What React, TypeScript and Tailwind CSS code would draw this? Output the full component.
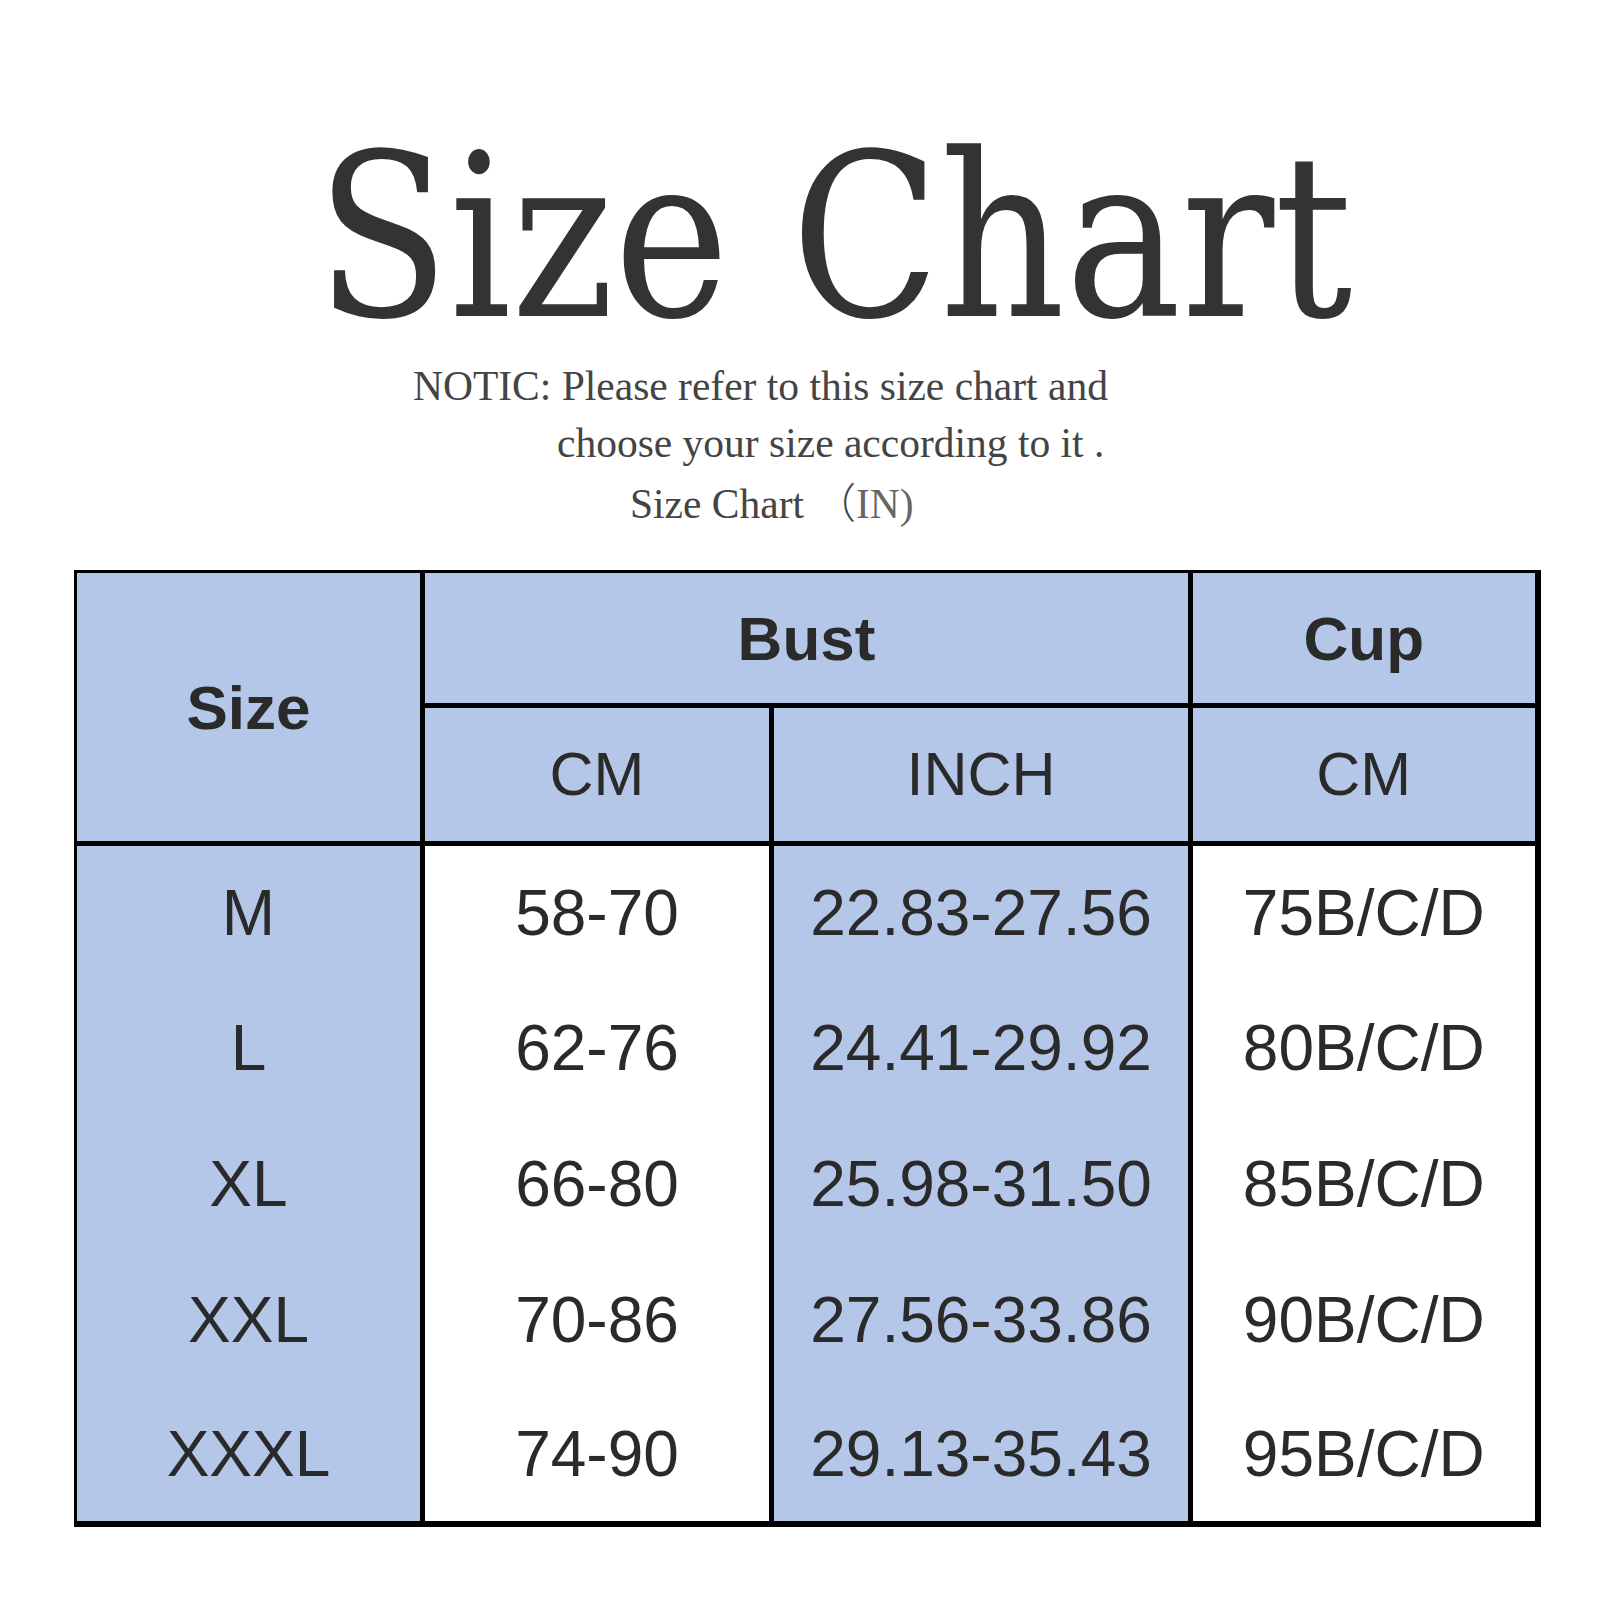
const rows = [
  ['M', '58-70', '22.83-27.56', '75B/C/D'],
  ['L', '62-76', '24.41-29.92', '80B/C/D'],
  ['XL', '66-80', '25.98-31.50', '85B/C/D'],
  ['XXL', '70-86', '27.56-33.86', '90B/C/D'],
  ['XXXL', '74-90', '29.13-35.43', '95B/C/D'],
];

export default function App() {
  const blue = 'bg-[#b5c7e8]';
  const head = `${blue} border-[5px] border-black`;
  return (
    <div className="w-[1600px] h-[1600px] bg-white pt-[138px] font-['Liberation_Sans',Arial,sans-serif]">
      {/* Title */}
      <div className="ml-[316px] origin-left scale-x-[0.957] text-[226px] leading-[200px] text-[#333333] font-['DejaVu_Serif',serif] font-stretch-condensed whitespace-nowrap">
        Size Chart
      </div>

      {/* Notice */}
      <div className="mt-[20px] text-[41.5px] leading-[57px] text-[#444444] font-['Liberation_Serif','Noto_Sans_CJK_SC',serif] whitespace-nowrap">
        <div className="ml-[413px]">NOTIC: Please refer to this size chart and</div>
        <div className="ml-[557px]">choose your size according to it .</div>
        <div className="ml-[630px]">
          Size Chart <span className="font-['Noto_Sans_CJK_SC',sans-serif] font-light">（</span>
          <span className="text-[#666666]">IN)</span>
        </div>
      </div>

      {/* Table */}
      <table className="ml-[74px] mt-[37px] w-[1462px] table-fixed border-collapse border-t-[3px] border-l-[3px] border-r-[6px] border-b-[6px] border-black text-[#2a2a2a]">
        <colgroup>
          <col className="w-[347px]" />
          <col className="w-[349px]" />
          <col className="w-[419px]" />
          <col className="w-[347px]" />
        </colgroup>
        <thead>
          <tr className="h-[134px]">
            <th rowSpan={2} className={`${head} border-t-0 border-l-0 text-[62px] font-bold`}>Size</th>
            <th colSpan={2} className={`${head} border-t-0 text-[62px] font-bold`}>Bust</th>
            <th className={`${head} border-t-0 border-r-0 text-[62px] font-bold`}>Cup</th>
          </tr>
          <tr className="h-[138px]">
            <th className={`${head} text-[61px] font-normal`}>CM</th>
            <th className={`${head} text-[61px] font-normal`}>INCH</th>
            <th className={`${head} border-r-0 text-[61px] font-normal`}>CM</th>
          </tr>
        </thead>
        <tbody>
          {rows.map((r) => (
            <tr key={r[0]} className="h-[136px] text-[64px] text-center">
              <td className={`${blue} border-r-[5px] border-black`}>{r[0]}</td>
              <td className="bg-white border-x-[5px] border-black">{r[1]}</td>
              <td className={`${blue} border-x-[5px] border-black`}>{r[2]}</td>
              <td className="bg-white border-l-[5px] border-black">{r[3]}</td>
            </tr>
          ))}
        </tbody>
      </table>
    </div>
  );
}
